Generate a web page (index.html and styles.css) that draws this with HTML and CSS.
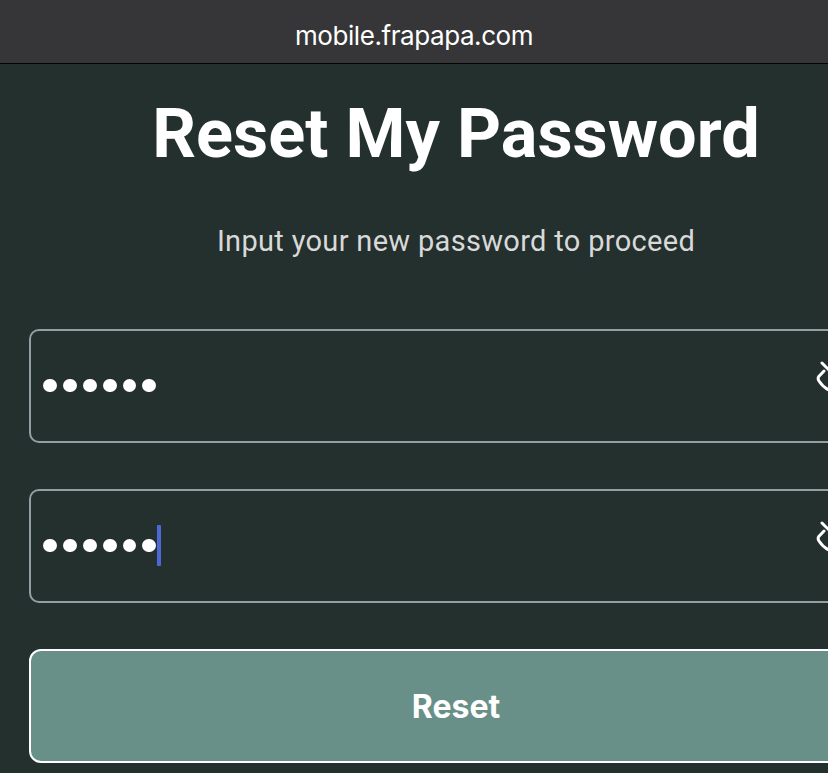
FILE: index.html
```html
<!DOCTYPE html>
<html lang="en">
<head>
    <meta charset="UTF-8">
    <meta name="viewport" content="width=device-width, initial-scale=1.0">
    <title>Reset My Password</title>
    <link rel="stylesheet" href="styles.css">
</head>
<body>
    <div class="address-bar">mobile.frapapa.com</div>

    <div class="page">
        <h1>Reset My Password</h1>
        <p class="subtitle">Input your new password to proceed</p>

        <form class="reset-form">
            <div class="field">
                <div class="dots"><i></i><i></i><i></i><i></i><i></i><i></i></div>
                <svg class="eye" width="52" height="40" viewBox="0 0 52 40">
                    <path d="M7 4 L38 35"/>
                    <path d="M9 12 L4 17.200 Q2.300 19.500 4 22 C8 28 15 33 23 33 C26 33 29 32 31.500 30.500"/>
                    <path d="M17 7 C19 6.300 21 6 23 6 C34 6 43 16 43 19.500 C43 21.500 40 25 37 27.500"/>
                </svg>
            </div>
            <div class="field">
                <div class="dots"><i></i><i></i><i></i><i></i><i></i><i></i></div>
                <span class="caret"></span>
                <svg class="eye" width="52" height="40" viewBox="0 0 52 40">
                    <path d="M7 4 L38 35"/>
                    <path d="M9 12 L4 17.200 Q2.300 19.500 4 22 C8 28 15 33 23 33 C26 33 29 32 31.500 30.500"/>
                    <path d="M17 7 C19 6.300 21 6 23 6 C34 6 43 16 43 19.500 C43 21.500 40 25 37 27.500"/>
                </svg>
            </div>
            <button type="button">Reset</button>
        </form>
    </div>
</body>
</html>
```
FILE: styles.css
```css
* {
    box-sizing: border-box;
}
html {
    overflow: hidden;
    background-color: #23302d;
}
body {
    margin: 0;
    height: 773px;
    overflow: hidden;
    color: #fff;
    font-family: Roboto, sans-serif;
}
.address-bar {
    height: 64px;
    padding-top: 20px;
    background-color: #363638;
    border-bottom: 1px solid #050505;
    font-family: Inter, sans-serif;
    font-size: 26px;
    line-height: 32px;
    letter-spacing: -0.42px;
    text-align: center;
}
/* the page is a bit wider than the visible window */
.page {
    width: 912px;
    padding: 30px 29px 0;
}
h1 {
    margin: 0;
    font-size: 68.5px;
    line-height: 80px;
    font-weight: 700;
    text-align: center;
    white-space: nowrap;
}
.subtitle {
    margin: 47px 0 0;
    color: #d9d9d9;
    font-size: 29px;
    line-height: 40px;
    letter-spacing: 0.32px;
    text-align: center;
}
.reset-form {
    display: flex;
    flex-direction: column;
    gap: 46px;
    margin-top: 68px;
}
.field {
    display: flex;
    align-items: center;
    height: 114px;
    padding: 0 14px 1px 12px;
    border: 2px solid #939fa2;
    border-radius: 10px;
}
.dots {
    display: flex;
    gap: 6px;
}
.dots i {
    width: 13.9px;
    height: 13.9px;
    border-radius: 50%;
    background-color: #fff;
}
.caret {
    width: 4px;
    height: 41px;
    margin-left: 0.6px;
    border-radius: 1px;
    background-color: #4f68d8;
}
.eye {
    margin: 0 0 13px auto;
    fill: none;
    stroke: #fff;
    stroke-width: 3;
    stroke-linecap: round;
    stroke-linejoin: round;
}
button {
    height: 114px;
    padding-bottom: 1px;
    border: 2px solid #fff;
    border-radius: 12px;
    background-color: #689088;
    color: #fff;
    font-family: Inter, sans-serif;
    font-size: 32px;
    font-weight: 700;
}
```
